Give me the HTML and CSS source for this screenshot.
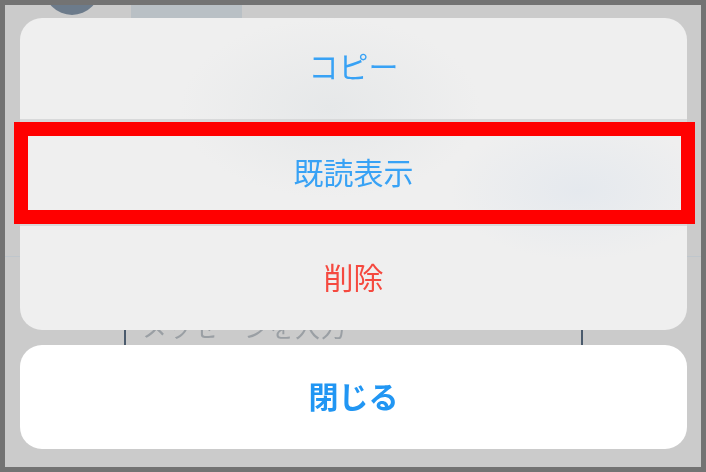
FILE: index.html
```html
<!DOCTYPE html>
<html lang="ja">
<head>
<meta charset="utf-8">
<title>アクションシート</title>
<link rel="stylesheet" href="styles.css">
</head>
<body>
<div class="frame">
  <div class="behind" aria-hidden="true">
    <div class="avatar"></div>
    <div class="bubble"></div>
    <div class="rule"></div>
    <div class="input"><span>メッセージを入力</span></div>
  </div>
  <div class="sheet">
    <div class="menu">
      <div class="row row-first"><span class="label">コピー</span></div>
      <div class="row row-second"><span class="label">既読表示</span><div class="highlight"></div></div>
      <div class="row row-last"><span class="label danger">削除</span></div>
    </div>
    <div class="close"><span class="close-label">閉じる</span></div>
  </div>
</div>
</body>
</html>
```

FILE: styles.css
```css
html, body {
  margin: 0;
  padding: 0;
  background: #cbcbcb;
}

.frame {
  position: relative;
  box-sizing: border-box;
  width: 706px;
  height: 472px;
  border: 5px solid #737373;
  background: #cbcbcb;
  overflow: hidden;
  font-family: "Noto Sans CJK JP", "Noto Sans", sans-serif;
}

.behind {
  position: absolute;
  inset: 0;
}

.avatar {
  position: absolute;
  left: 39px;
  top: -46px;
  width: 56px;
  height: 56px;
  border-radius: 50%;
  background: #6c7b8b;
}

.bubble {
  position: absolute;
  left: 126px;
  top: 0;
  width: 111px;
  height: 13px;
  background: #b9c0c5;
}

.rule {
  position: absolute;
  left: 0;
  right: 0;
  top: 251px;
  height: 1px;
  background: #bfc6cc;
}

.input {
  position: absolute;
  left: 119px;
  top: 290px;
  box-sizing: border-box;
  width: 459px;
  height: 50px;
  border-left: 2px solid #4a5a6c;
  border-right: 2px solid #4a5a6c;
  padding-left: 16px;
  color: #9a9fa4;
  font-size: 25px;
  line-height: 62px;
  letter-spacing: 0.6px;
  white-space: nowrap;
  overflow: hidden;
  filter: blur(0.5px);
}

.sheet {
  position: relative;
  display: flex;
  flex-direction: column;
  gap: 15px;
  padding: 13px 14px 0 15px;
}

.menu {
  display: flex;
  flex-direction: column;
  height: 312px;
  border-radius: 22px;
  background:
    radial-gradient(ellipse 130px 70px at 560px 172px, #e5e9ee, rgba(229, 233, 238, 0)),
    radial-gradient(ellipse 150px 90px at 310px 90px, #e6e8e9, rgba(230, 232, 233, 0)),
    #efefef;
}

.row {
  position: relative;
  display: flex;
  flex: 1;
  align-items: center;
  justify-content: center;
}

.row-first,
.row-second {
  border-bottom: 3px solid #d8d9da;
}

.row-first {
  flex: 0 0 104px;
  padding-bottom: 7px;
  box-sizing: border-box;
}

.row-second {
  flex: 0 0 104px;
  padding-bottom: 3px;
  box-sizing: border-box;
}

.row-last {
  padding-bottom: 4px;
}

.label {
  color: #38a2f5;
  font-size: 30px;
  line-height: 40px;
  filter: blur(0.3px);
}

.danger {
  color: #f5493f;
}

.highlight {
  position: absolute;
  left: -6px;
  right: -8px;
  top: 0;
  height: 102px;
  box-sizing: border-box;
  border: 14px solid #ff0000;
}

.close {
  display: flex;
  align-items: center;
  justify-content: center;
  height: 104px;
  padding-bottom: 5px;
  box-sizing: border-box;
  border-radius: 22px;
  background: #ffffff;
}

.close-label {
  color: #2196f3;
  font-size: 30px;
  font-weight: 700;
  filter: blur(0.3px);
}
```
